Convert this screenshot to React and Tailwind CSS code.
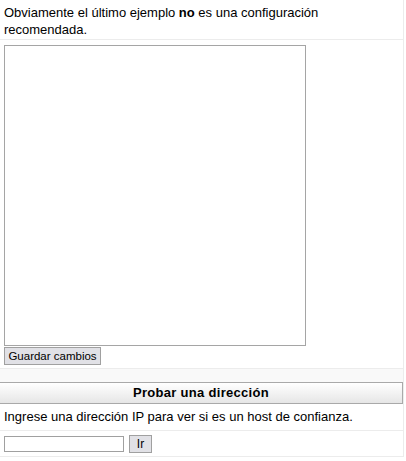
export default function App() {
  return (
    <div className="w-[406px] h-[461px] bg-white overflow-hidden text-[13px] text-black" style={{ fontFamily: '"Liberation Sans", Arial, sans-serif' }}>
      <div className="w-[404px] border-r border-[#ececec]">
        <div className="px-[4px] pt-[4px] pb-[1px] leading-[17px] border-b border-[#ececec]">
          Obviamente el último ejemplo <b>no</b> es una configuración recomendada.
        </div>
        <div className="px-[4px] pt-[5px] pb-[3px] border-b border-[#ececec]">
          <div className="w-[302px] h-[301px] border border-[#a5a5a5] bg-white"></div>
          <button className="mt-[1px] h-[18px] w-[97px] bg-[#e1e1e6] border border-[#a0a0a0] text-[11.5px] leading-[14px] flex items-center justify-center">Guardar cambios</button>
        </div>
        <div className="h-[13px] bg-[#f9f9f9]"></div>
        <div className="h-[22px] border-t border-b border-[#a9a9a9] border-r bg-gradient-to-b from-white to-[#e6e6e6] flex items-center justify-center font-bold text-[13px] tracking-[0.3px]">
          Probar una dirección
        </div>
        <div className="px-[4px] h-[27px] flex items-center border-b border-[#ececec]">
          Ingrese una dirección IP para ver si es un host de confianza.
        </div>
        <div className="px-[4px] h-[26px] flex items-center gap-[5px] border-b border-[#ececec]">
          <input className="w-[120px] h-[16px] border border-[#a0a0a0] bg-white" />
          <button className="w-[23px] h-[18px] bg-[#e1e1e6] border border-[#a0a0a0] text-[12px] flex items-center justify-center">Ir</button>
        </div>
      </div>
    </div>
  );
}
